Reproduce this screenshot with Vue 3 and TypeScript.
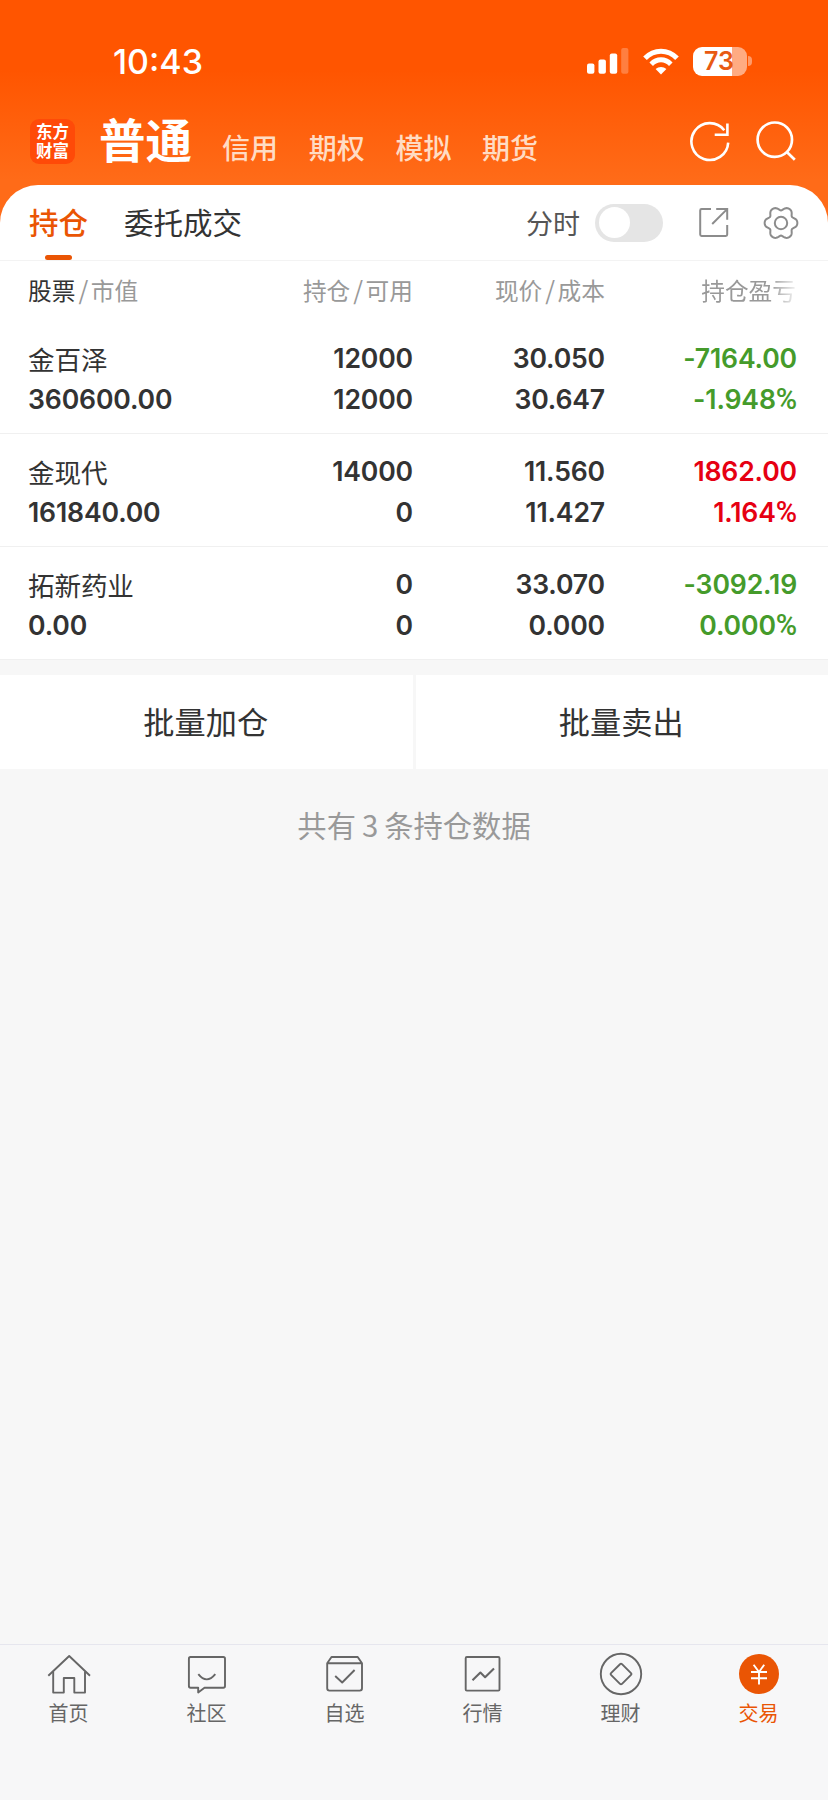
<script setup lang="ts">
interface Holding {
  name: string
  value: string
  held: string
  usable: string
  price: string
  cost: string
  profit: string
  rate: string
  trend: 'up' | 'down'
}

const accounts: string[] = ['信用', '期权', '模拟', '期货']

const holdings: Holding[] = [
  { name: '金百泽', value: '360600.00', held: '12000', usable: '12000', price: '30.050', cost: '30.647', profit: '-7164.00', rate: '-1.948', trend: 'down' },
  { name: '金现代', value: '161840.00', held: '14000', usable: '0', price: '11.560', cost: '11.427', profit: '1862.00', rate: '1.164', trend: 'up' },
  { name: '拓新药业', value: '0.00', held: '0', usable: '0', price: '33.070', cost: '0.000', profit: '-3092.19', rate: '0.000', trend: 'down' },
]

const navItems: { id: string; label: string }[] = [
  { id: 'home', label: '首页' },
  { id: 'community', label: '社区' },
  { id: 'watchlist', label: '自选' },
  { id: 'market', label: '行情' },
  { id: 'wealth', label: '理财' },
  { id: 'trade', label: '交易' },
]

// Six-lobed outline of the settings gear, centred in a 40x40 box.
const gearPath: string =
  Array.from({ length: 120 }, (_, i) => {
    const a = (i / 120) * Math.PI * 2
    const r = 14.75 + 1.9 * Math.cos(6 * a) - 0.3 * Math.cos(12 * a)
    return `${i ? 'L' : 'M'}${(20 + r * Math.cos(a)).toFixed(2)} ${(20 + r * Math.sin(a)).toFixed(2)}`
  }).join('') + 'Z'
</script>

<template>
  <div class="app">
    <header class="top">
      <div class="status">
        <span class="clock">10:43</span>
        <div class="status-icons">
          <svg class="signal" width="42" height="26" viewBox="0 0 42 26" fill="#fff">
            <rect x="0" y="15.5" width="7.4" height="10.3" rx="2" />
            <rect x="11.5" y="11.5" width="7.4" height="14.3" rx="2" />
            <rect x="22.8" y="5.5" width="7.4" height="20.3" rx="2" />
            <rect x="34.2" y="0" width="7.2" height="25.8" rx="2" opacity=".25" />
          </svg>
          <svg class="wifi" width="36" height="27" viewBox="0 0 36 27" fill="none" stroke="#fff" stroke-width="5">
            <path d="M2 10.2C11 .8 25 .8 34 10.2" />
            <path d="M8.2 16.2C14 10.4 22 10.4 27.8 16.2" />
            <path d="M18 26.5L12.6 21.1C15.6 18.2 20.4 18.2 23.4 21.1Z" fill="#fff" stroke="none" />
          </svg>
          <div class="battery"><span>73</span></div>
          <i class="battery-tip"></i>
        </div>
      </div>
      <div class="account-bar">
        <div class="brand"><span>东方</span><span>财富</span></div>
        <h1>普通</h1>
        <nav class="accounts">
          <span v-for="a in accounts" :key="a">{{ a }}</span>
        </nav>
        <div class="actions">
          <svg width="42" height="42" viewBox="0 0 42 42" fill="none" stroke="#fff" stroke-width="2.6">
            <path d="M39.2 21.6A18.4 18.4 0 1 1 35.3 9.2" />
            <path d="M38.4 2.4V13.7H25.7" />
          </svg>
          <svg width="42" height="42" viewBox="0 0 42 42" fill="none" stroke="#fff" stroke-width="2.7">
            <circle cx="19.8" cy="18.7" r="17.2" />
            <path d="M31.6 30.8L39.8 38.8" />
          </svg>
        </div>
      </div>
    </header>

    <main class="sheet">
      <div class="tabs">
        <span class="tab active">持仓</span>
        <span class="tab">委托成交</span>
        <div class="tools">
          <span class="minute">分时</span>
          <span class="switch"></span>
          <svg class="share" width="32" height="32" viewBox="0 0 32 32" fill="none" stroke="#8c8c8c" stroke-width="2">
            <path d="M13 3H3.6Q2.2 3 2.2 4.4V28.6Q2.2 30 3.6 30H27.8Q29.2 30 29.2 28.6V19" />
            <path d="M18.2 3H29.2V13.8M28.6 3.6L14.2 18" />
          </svg>
          <svg class="gear" width="40" height="40" viewBox="0 0 40 40" fill="none" stroke="#8c8c8c" stroke-width="2">
            <path :d="gearPath" />
            <circle cx="20" cy="20" r="6.2" />
          </svg>
        </div>
      </div>

      <div class="row heads">
        <div><b>股票</b><i>/</i>市值</div>
        <div>持仓<i>/</i>可用</div>
        <div>现价<i>/</i>成本</div>
        <div class="faded">持仓盈亏</div>
      </div>

      <div v-for="h in holdings" :key="h.name" class="row holding">
        <div><span class="name">{{ h.name }}</span><span>{{ h.value }}</span></div>
        <div><span>{{ h.held }}</span><span>{{ h.usable }}</span></div>
        <div><span>{{ h.price }}</span><span>{{ h.cost }}</span></div>
        <div :class="h.trend"><span>{{ h.profit }}</span><span>{{ h.rate }}<em>%</em></span></div>
      </div>
    </main>

    <div class="batch">
      <button type="button">批量加仓</button>
      <button type="button">批量卖出</button>
    </div>
    <p class="summary">共有<span>3</span>条持仓数据</p>

    <nav class="bottom">
      <div v-for="n in navItems" :key="n.id" class="nav-item" :class="{ current: n.id === 'trade' }">
        <svg width="44" height="44" viewBox="0 0 44 44" fill="none" stroke="#666" stroke-width="1.9" stroke-linejoin="round">
          <template v-if="n.id === 'home'">
            <path d="M1.3 23.8L22.2 4L43 23.8" />
            <path d="M6.2 19.5V40.6H16.8V26H27.3V40.6H38V19.5" />
          </template>
          <template v-else-if="n.id === 'community'">
            <path d="M5.5 5H38.3Q40 5 40 6.7V34Q40 35.7 38.3 35.7H19.5L13.2 40.4V35.7H5.5Q3.9 35.7 3.9 34V6.7Q3.9 5 5.5 5Z" />
            <path d="M13.3 22.2Q21.7 32.6 30.3 22.2" />
          </template>
          <template v-else-if="n.id === 'watchlist'">
            <path d="M4.2 11.2L8.5 5H34.7L39 11.2V36.3Q39 38.6 36.7 38.6H6.5Q4.2 38.6 4.2 36.3ZM4.2 11.2H39" />
            <path d="M12.2 24L19.2 30.5L31.6 18" />
          </template>
          <template v-else-if="n.id === 'market'">
            <rect x="4.7" y="5" width="33.8" height="33.6" rx="1.2" />
            <path d="M11.5 28.3L19.4 20.6L24.1 25.2L33 16.4" stroke-width="2.1" />
          </template>
          <template v-else-if="n.id === 'wealth'">
            <circle cx="22" cy="22" r="20.2" />
            <path d="M21 12.2Q22 11.2 23 12.2L32 21.1Q32.9 22 32 22.9L23 31.9Q22 32.8 21 31.9L12 22.9Q11.1 22 12 21.1Z" />
          </template>
          <template v-else>
            <circle cx="22" cy="22" r="20" fill="#ea5504" stroke="none" />
            <path d="M16.6 12.7L22 20L27.2 12.7M14 20H30M14 26.2H30M22 20V32.4" stroke="#fff" />
          </template>
        </svg>
        <span>{{ n.label }}</span>
      </div>
    </nav>
  </div>
</template>

<style>
body {
  background: #f7f7f7;
}
</style>

<style scoped>
* {
  box-sizing: border-box;
}
.app {
  height: 1800px;
  display: flex;
  flex-direction: column;
  font-family: Inter, "Noto Sans CJK SC", sans-serif;
  color: #333;
  background: #f7f7f7;
}
i,
em {
  font-style: normal;
}
.top {
  height: 224px;
  flex: none;
  background: linear-gradient(#ff5500 70px, #ff6b18 180px);
  color: #fff;
}
.status {
  height: 105px;
  padding: 17px 76px 0 113px;
  display: flex;
  align-items: center;
  justify-content: space-between;
}
.clock {
  padding-top: 1px;
  font-size: 34px;
  font-weight: 500;
  line-height: 40px;
}
.status-icons {
  display: flex;
  align-items: center;
}
.wifi {
  margin-left: 14px;
}
.battery {
  width: 54px;
  height: 29px;
  margin-left: 14px;
  border-radius: 9px;
  background: linear-gradient(90deg, #fff 39px, #ffab82 39px);
  text-align: center;
}
.battery span {
  display: block;
  padding-right: 2px;
  color: #e85a12;
  font-size: 25px;
  font-weight: 600;
  line-height: 29px;
}
.battery-tip {
  width: 4px;
  height: 10px;
  margin-left: 1px;
  border-radius: 0 5px 5px 0;
  background: #ff9a69;
}
.account-bar {
  height: 74px;
  padding: 0 31px 0 30px;
  display: flex;
  align-items: center;
}
.brand {
  width: 45px;
  height: 45px;
  margin-top: -1px;
  border-radius: 9px;
  background: #ff4a08;
  display: flex;
  flex-direction: column;
  align-items: center;
  justify-content: center;
  font-size: 16.5px;
  font-weight: 700;
  line-height: 18.5px;
}
h1 {
  margin: -2px 0 0 24px;
  font-size: 46.5px;
  font-weight: 700;
  line-height: 60px;
}
.accounts {
  margin: 13px 0 0 30px;
  display: flex;
  gap: 30.7px;
  font-size: 28px;
  font-weight: 500;
  line-height: 40px;
  color: #ffdcc4;
}
.actions {
  margin-left: auto;
  display: flex;
  gap: 24px;
}
.sheet {
  height: 475px;
  margin-top: -39.5px;
  flex: none;
  background: #fff;
  border-radius: 38px 38px 0 0;
}
.tabs {
  height: 76px;
  padding: 0 27px 0 29px;
  display: flex;
  align-items: center;
  border-bottom: 1px solid #f3f3f3;
}
.tab {
  height: 75px;
  margin-right: 36px;
  display: flex;
  flex-direction: column;
  align-items: center;
  font-size: 29.5px;
  line-height: 77px;
}
.active {
  color: #ea5504;
  font-weight: 500;
}
.active::after {
  content: "";
  width: 27px;
  height: 5px;
  flex: none;
  margin-top: -7px;
  border-radius: 2.5px;
  background: #ea5504;
}
.tools {
  margin-left: auto;
  display: flex;
  align-items: center;
}
.minute {
  font-size: 27px;
  color: #555;
}
.switch {
  width: 68px;
  height: 38px;
  margin: 1px 35px 0 15px;
  padding: 3.5px;
  border-radius: 19px;
  background: #e5e5e5;
}
.switch::before {
  content: "";
  display: block;
  width: 31px;
  height: 31px;
  border-radius: 50%;
  background: #fff;
}
.gear {
  margin: 1px 0 0 31px;
}
.row {
  padding: 0 31px 0 28px;
  display: grid;
  grid-template-columns: 193px 192px 192px 192px;
}
.row > div:not(:first-child) {
  text-align: right;
}
.heads {
  height: 60px;
  line-height: 62px;
  font-size: 23.7px;
  color: #999;
}
.heads b {
  color: #333;
  font-weight: 400;
}
.heads i {
  margin: 0 2.5px 0 3px;
  font-family: "Noto Sans CJK SC", sans-serif;
  font-size: 25px;
  line-height: 1;
}
.faded {
  padding-right: 1px;
  -webkit-mask-image: linear-gradient(90deg, #000 165px, transparent 195px);
  mask-image: linear-gradient(90deg, #000 165px, transparent 195px);
}
.holding {
  height: 113px;
  padding-top: 17px;
  font-size: 26.6px;
  font-weight: 600;
  line-height: 41px;
  border-bottom: 1px solid #f0f0f0;
}
.holding span {
  display: block;
  letter-spacing: -0.15px;
}
.holding .name {
  height: 41px;
  font-weight: 400;
  line-height: 45px;
}
.holding em {
  font-family: Roboto, sans-serif;
  font-size: 29px;
  font-weight: 500;
  line-height: 1;
}
.up {
  color: #e60012;
}
.down {
  color: #459b2b;
}
.batch {
  height: 94px;
  margin-top: 15px;
  flex: none;
  display: flex;
  gap: 3px;
}
.batch button {
  flex: 1;
  padding: 0 1px 2px 0;
  border: 0;
  background: #fff;
  color: #333;
  font: inherit;
  font-size: 31.2px;
}
.summary {
  margin: 36px 0 0;
  text-align: center;
  font-size: 29.3px;
  line-height: 44px;
  color: #999;
}
.summary span {
  margin: 0 6px;
  font-family: "Noto Sans CJK SC", sans-serif;
  line-height: 1;
}
.bottom {
  height: 156px;
  margin-top: auto;
  flex: none;
  display: grid;
  grid-template-columns: repeat(6, 1fr);
  border-top: 1px solid #e6e6ee;
  background: #f7f7f8;
}
.nav-item {
  padding-top: 7px;
  display: flex;
  flex-direction: column;
  align-items: center;
  font-size: 20px;
  line-height: 28px;
  color: #666;
}
.nav-item span {
  margin-top: 4px;
  padding-right: 1px;
}
.current {
  color: #ea5504;
}
</style>
